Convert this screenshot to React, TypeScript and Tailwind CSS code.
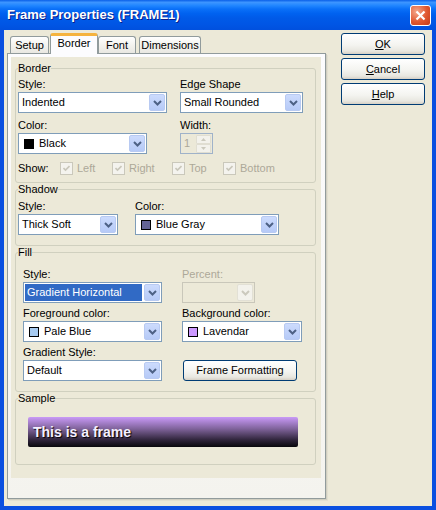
import React from "react";

const Chevron = ({ color = "#4D6185" }: { color?: string }) => (
  <svg width="9" height="6" viewBox="0 0 9 6">
    <path d="M1 1 L4.5 4.5 L8 1" fill="none" stroke={color} strokeWidth="2" />
  </svg>
);

function Drop({ disabled }: { disabled?: boolean }) {
  return (
    <div
      className={`mr-[1px] flex h-[17px] w-[16px] shrink-0 items-center justify-center rounded-[2px] border ${
        disabled
          ? "border-[#E2E0D5] bg-[#F3F2EC]"
          : "border-[#B8CAF2] bg-[linear-gradient(#CCDBFD,#B6CAF7)]"
      }`}
    >
      <Chevron color={disabled ? "#CBC9BD" : "#4D6185"} />
    </div>
  );
}

function Select({
  className = "",
  children,
  disabled,
  hl,
}: {
  className?: string;
  children?: React.ReactNode;
  disabled?: boolean;
  hl?: boolean;
}) {
  return (
    <div
      className={`flex h-[21px] items-center border ${
        disabled ? "border-[#C9C7BA] bg-[#ECE9D8]" : "border-[#7F9DB9] bg-white"
      } ${className}`}
    >
      {hl ? (
        <div className="ml-[1px] mr-[2px] flex h-[17px] flex-1 items-center bg-[#316AC5] pl-[2px] text-white">
          {children}
        </div>
      ) : (
        <div className="flex min-w-0 flex-1 items-center pl-[3px]">{children}</div>
      )}
      <Drop disabled={disabled} />
    </div>
  );
}

const Swatch = ({ className }: { className: string }) => (
  <span className={`ml-[2px] mr-[5px] inline-block h-[10px] w-[10px] border border-black ${className}`} />
);

const Label = ({ children, className = "" }: { children?: React.ReactNode; className?: string }) => (
  <div className={`mb-[1px] h-[13px] leading-[13px] ${className}`}>{children}</div>
);

function Check({ label, className = "" }: { label: string; className?: string }) {
  return (
    <div className={`flex items-center ${className}`}>
      <div className="flex h-[13px] w-[13px] items-center justify-center border border-[#CAC8BB] bg-[#F4F3EE]">
        <svg width="7" height="7" viewBox="0 0 7 7">
          <path d="M0.5 3 L2.5 5 L6.5 1" fill="none" stroke="#C9C7BA" strokeWidth="1.6" />
        </svg>
      </div>
      <span className="ml-[4px] text-[#ACA899]">{label}</span>
    </div>
  );
}

function Spinner() {
  return (
    <div className="flex h-[21px] w-[33px] items-center border border-[#9FB2C9] bg-[#ECE9D8]">
      <span className="flex-1 pl-[3px] text-[#ACA899]">1</span>
      <div className="mr-[1px] flex flex-col">
        {[0, 1].map((i) => (
          <div
            key={i}
            className="flex h-[9px] w-[15px] items-center justify-center rounded-[1px] border border-[#E0DED2] bg-[#F3F2EC]"
          >
            <svg width="5" height="3" viewBox="0 0 5 3">
              <path d={i === 0 ? "M0 3 L2.5 0 L5 3Z" : "M0 0 L2.5 3 L5 0Z"} fill="#CBC9BD" />
            </svg>
          </div>
        ))}
      </div>
    </div>
  );
}

const XpButton = ({ children, className = "" }: { children: React.ReactNode; className?: string }) => (
  <div
    className={`flex items-center justify-center rounded-[3px] border border-[#003C74] bg-[linear-gradient(#FFFFFF,#F4F4F0_55%,#E8E7E0_85%,#D6D0C5)] ${className}`}
  >
    {children}
  </div>
);

const Tab = ({ children, className = "" }: { children: React.ReactNode; className?: string }) => (
  <div
    className={`flex h-[17px] items-center justify-center rounded-t-[3px] border border-b-0 border-[#919B9C] bg-[linear-gradient(#FFFFFF,#F1F0EB_60%,#E9E8E2)] ${className}`}
  >
    {children}
  </div>
);

export default function App() {
  return (
    <div className="flex h-[510px] w-[436px] flex-col bg-[#0A4FE0] font-['Liberation_Sans',Arial,sans-serif] text-[11px] leading-[13px] text-black">
      <div className="flex h-[30px] shrink-0 items-center bg-[linear-gradient(180deg,#0A5FE8_0%,#3D95FF_8%,#2287FF_18%,#0A70F8_30%,#0062F0_45%,#005AE8_60%,#0056E5_80%,#0050DE_100%)] pl-[7px] pr-[5px]">
        <span className="flex-1 text-[13px] font-bold leading-[16px] text-white [text-shadow:1px_1px_0_#0A1E8A]">
          Frame Properties (FRAME1)
        </span>
        <div className="flex h-[21px] w-[21px] items-center justify-center rounded-[3px] border border-white bg-[radial-gradient(circle_at_30%_30%,#F4A88C,#E0572F_55%,#C23A19)]">
          <svg width="11" height="11" viewBox="0 0 11 11">
            <path d="M1.5 1.5 L9.5 9.5 M9.5 1.5 L1.5 9.5" stroke="white" strokeWidth="2.2" />
          </svg>
        </div>
      </div>

      <div className="mx-[4px] mb-[4px] flex flex-1 bg-[#ECE9D8]">
        <div className="ml-[3px] mt-[3px] flex flex-col">
          <div className="flex h-[20px] items-end">
            <Tab className="ml-[3px] w-[39px]">Setup</Tab>
            <div className="relative z-10 -mb-[1px] ml-[1px] flex h-[21px] w-[48px] items-start justify-center rounded-t-[3px] border-x border-t-[3px] border-x-[#919B9C] border-t-[#F5B33E] bg-[#FCFCFE] pt-[1px]">
              Border
            </div>
            <Tab className="w-[38px]">Font</Tab>
            <Tab className="ml-[3px] w-[62px]">Dimensions</Tab>
          </div>

          <div className="flex h-[446px] w-[319px] border border-[#919B9C] bg-[linear-gradient(#FCFCFE,#F4F3EE)] pb-[20px] pl-[3px] pr-[4px] pt-[3px] shadow-[1px_1px_0_#D0CEC0,2px_2px_0_#E2DFD0]">
            <div className="flex flex-1 flex-col bg-[#ECE9D8] pl-[4px] pt-[5px]">
              <fieldset className="h-[121px] w-[301px] rounded-[3px] border border-[#D0D0BF] px-[2px]">
                <legend className="leading-[13px]">Border</legend>
                <div className="flex pt-[3px]">
                  <div className="w-[162px]">
                    <Label>Style:</Label>
                    <Select className="w-[149px]">Indented</Select>
                    <Label className="mt-[6px]">Color:</Label>
                    <Select className="w-[129px]">
                      <Swatch className="bg-black" />
                      Black
                    </Select>
                  </div>
                  <div>
                    <Label>Edge Shape</Label>
                    <Select className="w-[123px]">Small Rounded</Select>
                    <Label className="mt-[6px]">Width:</Label>
                    <Spinner />
                  </div>
                </div>
                <div className="mt-[8px] flex items-center">
                  <span className="w-[42px]">Show:</span>
                  <Check label="Left" className="w-[52px]" />
                  <Check label="Right" className="w-[60px]" />
                  <Check label="Top" className="w-[51px]" />
                  <Check label="Bottom" />
                </div>
              </fieldset>

              <fieldset className="h-[63px] w-[301px] rounded-[3px] border border-[#D0D0BF] px-[2px]">
                <legend className="leading-[13px]">Shadow</legend>
                <div className="flex pt-[4px]">
                  <div className="w-[117px]">
                    <Label>Style:</Label>
                    <Select className="w-[100px]">Thick Soft</Select>
                  </div>
                  <div>
                    <Label>Color:</Label>
                    <Select className="w-[144px]">
                      <Swatch className="bg-[#646496]" />
                      Blue Gray
                    </Select>
                  </div>
                </div>
              </fieldset>

              <fieldset className="h-[146px] w-[301px] rounded-[3px] border border-[#D0D0BF] px-[2px]">
                <legend className="leading-[13px]">Fill</legend>
                <div className="grid grid-cols-[159px_auto] gap-y-[4px] pl-[5px] pt-[9px]">
                  <div>
                    <Label>Style:</Label>
                    <Select className="w-[139px]" hl>
                      Gradient Horizontal
                    </Select>
                  </div>
                  <div>
                    <Label className="text-[#ACA899]">Percent:</Label>
                    <Select className="w-[73px]" disabled />
                  </div>
                  <div>
                    <Label>Foreground color:</Label>
                    <Select className="w-[139px]">
                      <Swatch className="bg-[#A6CAF0]" />
                      Pale Blue
                    </Select>
                  </div>
                  <div>
                    <Label>Background color:</Label>
                    <Select className="w-[120px]">
                      <Swatch className="bg-[#CC99FF]" />
                      Lavendar
                    </Select>
                  </div>
                  <div>
                    <Label>Gradient Style:</Label>
                    <Select className="w-[139px]">Default</Select>
                  </div>
                  <div className="pl-[1px] pt-[14px]">
                    <XpButton className="h-[21px] w-[114px]">Frame Formatting</XpButton>
                  </div>
                </div>
              </fieldset>

              <fieldset className="h-[73px] w-[301px] rounded-[3px] border border-[#D0D0BF] px-[2px]">
                <legend className="leading-[13px]">Sample</legend>
                <div className="ml-[10px] mt-[12px] flex h-[30px] w-[270px] items-center rounded-[2px] bg-[linear-gradient(#C99AF7,#7E6299_40%,#2C2237_78%,#08070B)] pl-[5px] text-[14px] font-bold leading-[16px] text-[#F6F0FF] [text-shadow:1px_1px_1px_#000]">
                  This is a frame
                </div>
              </fieldset>
            </div>
          </div>
        </div>

        <div className="ml-[15px] mt-[3px] flex flex-col gap-[3px]">
          <XpButton className="h-[22px] w-[84px]">
            <span>
              <span className="underline">O</span>K
            </span>
          </XpButton>
          <XpButton className="h-[22px] w-[84px]">
            <span>
              <span className="underline">C</span>ancel
            </span>
          </XpButton>
          <XpButton className="h-[22px] w-[84px]">
            <span>
              <span className="underline">H</span>elp
            </span>
          </XpButton>
        </div>
      </div>
    </div>
  );
}
